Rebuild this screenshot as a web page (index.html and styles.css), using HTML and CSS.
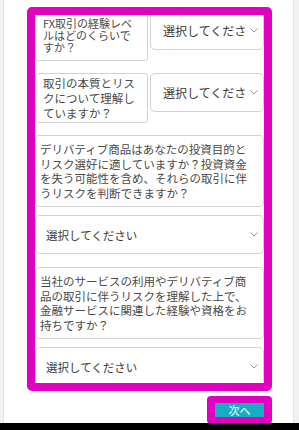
FILE: index.html
```html
<!DOCTYPE html>
<html lang="ja">
<head>
<meta charset="utf-8">
<link rel="stylesheet" href="styles.css">
</head>
<body>
<div class="screen">
  <div class="panel">
    <div class="frame">
      <div class="content">
        <div class="pair first">
          <div class="label tight">FX取引の経験レベ<br>ルはどのくらいで<br>すか？</div>
          <div class="select"><span class="val">選択してください</span><svg class="chev" width="8" height="5" viewBox="0 0 8 5"><polyline points="0.5,0.5 4,4 7.5,0.5" fill="none" stroke="#9a9a9a" stroke-width="1"/></svg></div>
        </div>
        <div class="pair">
          <div class="label">取引の本質とリス<br>クについて理解し<br>ていますか？</div>
          <div class="select"><span class="val">選択してください</span><svg class="chev" width="8" height="5" viewBox="0 0 8 5"><polyline points="0.5,0.5 4,4 7.5,0.5" fill="none" stroke="#9a9a9a" stroke-width="1"/></svg></div>
        </div>
        <div class="block">
          <div class="label wide">デリバティブ商品はあなたの投資目的と<br>リスク選好に適していますか？投資資金<br>を失う可能性を含め、それらの取引に伴<br>うリスクを判断できますか？</div>
          <div class="select full"><span class="val">選択してください</span><svg class="chev" width="8" height="5" viewBox="0 0 8 5"><polyline points="0.5,0.5 4,4 7.5,0.5" fill="none" stroke="#9a9a9a" stroke-width="1"/></svg></div>
        </div>
        <div class="block last">
          <div class="label wide">当社のサービスの利用やデリバティブ商<br>品の取引に伴うリスクを理解した上で、<br>金融サービスに関連した経験や資格をお<br>持ちですか？</div>
          <div class="select full"><span class="val">選択してください</span><svg class="chev" width="8" height="5" viewBox="0 0 8 5"><polyline points="0.5,0.5 4,4 7.5,0.5" fill="none" stroke="#9a9a9a" stroke-width="1"/></svg></div>
        </div>
      </div>
    </div>
    <div class="actions">
      <div class="btn-ring"><button class="next">次へ</button></div>
    </div>
  </div>
  <div class="bottom-bar"></div>
</div>
</body>
</html>
```

FILE: styles.css
```css
html, body {
  margin: 0;
  padding: 0;
}
body {
  width: 299px;
  height: 430px;
  background: #f1f1f1;
  font-family: "Noto Sans CJK JP", "Noto Sans", sans-serif;
  color: #4a4a4a;
  overflow: hidden;
}
.screen {
  display: flex;
  flex-direction: column;
  height: 430px;
}
.panel {
  height: 423px;
  margin: 0 5px 0 3px;
  background: #ffffff;
  border-left: 1px solid #e4e4e4;
  border-right: 1px solid #e4e4e4;
  padding: 7px 0 0 23px;
  box-sizing: border-box;
  overflow: hidden;
}
.frame {
  width: 245px;
  height: 384px;
  box-sizing: border-box;
  border: 8px solid #e000c0;
  border-radius: 5px;
  overflow: hidden;
  background: #fff;
}
.content {
  margin-top: -4px;
}
.pair {
  display: grid;
  grid-template-columns: 113px minmax(0, 1fr);
  column-gap: 2px;
  align-items: start;
  margin-bottom: 12px;
}
.label {
  border: 1px solid #d2d2d2;
  border-radius: 3px;
  font-size: 11.5px;
  line-height: 15px;
  padding: 2px 7px 1px;
  color: #4a4a4a;
  background: #fff;
  white-space: nowrap;
}
.label.tight {
  font-size: 11px;
  line-height: 12px;
  padding: 5px 7px 7px;
}
.label.wide {
  border-radius: 4px;
  line-height: 14.5px;
  padding: 6px 4px 6px 4px;
}
.select {
  display: flex;
  align-items: center;
  height: 39px;
  box-sizing: border-box;
  border: 1px solid #d2d2d2;
  border-radius: 5px;
  padding: 0 5px 0 12px;
  background: #fff;
  font-size: 12px;
  color: #3c3c3c;
}
.select.full {
  padding-left: 10px;
  font-size: 11.5px;
}
.val {
  flex: 1;
  min-width: 0;
  overflow: hidden;
  white-space: nowrap;
}
.chev {
  flex: none;
  margin-left: 3px;
}
.block {
  display: flex;
  flex-direction: column;
  gap: 8px;
  margin-bottom: 13px;
}
.actions {
  display: flex;
  justify-content: flex-end;
  width: 245px;
  margin-top: 5px;
}
.btn-ring {
  background: #e000c0;
  border-radius: 4px;
  padding: 7px 8px;
}
.next {
  display: block;
  width: 49px;
  height: 14px;
  border: none;
  padding: 0;
  margin: 0;
  background: #18adc3;
  color: #ffffff;
  font-family: "Noto Sans CJK JP", sans-serif;
  font-size: 11px;
  line-height: 14px;
}
.bottom-bar {
  height: 7px;
  background: #000;
}
```
